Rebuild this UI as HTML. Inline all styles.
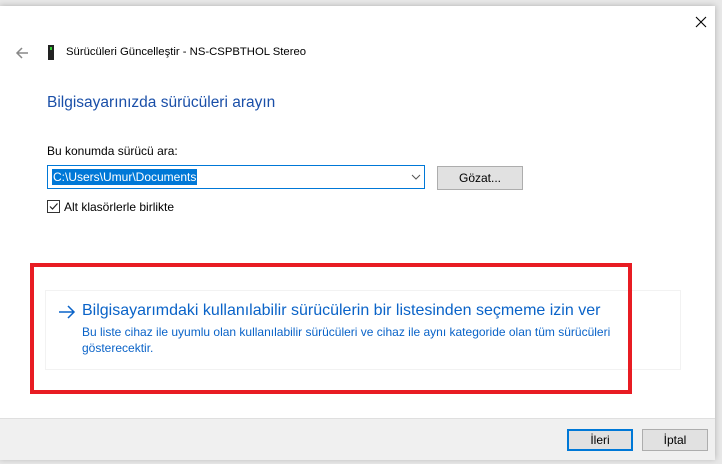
<!DOCTYPE html>
<html><head><meta charset="utf-8"><style>
body{margin:0;width:722px;height:464px;background:#e8e8e8;position:relative;overflow:hidden;font-family:"Segoe UI","Liberation Sans",sans-serif;font-size:12px;color:#000}
.win{position:absolute;left:0;top:6px;width:715px;height:453px;background:#fff;box-shadow:0 0 6px rgba(0,0,0,.25)}
.a{position:absolute;white-space:nowrap}
</style></head><body>
<div class="win">
<svg class="a" style="left:695px;top:10px" width="12" height="12"><path d="M1 1L11 11M11 1L1 11" stroke="#000" stroke-width="1.1"/></svg>
<svg class="a" style="left:15px;top:41px" width="14" height="12"><path d="M13 6H2M7 1L2 6L7 11" stroke="#888" stroke-width="1.5" fill="none"/></svg>
<div class="a" style="left:48px;top:39px;width:6px;height:15px;background:#222"></div>
<div class="a" style="left:50px;top:41px;width:2px;height:3px;background:#3c3"></div>
<div class="a" style="left:66px;top:40px;font-size:11.3px">Sürücüleri Güncelleştir - NS-CSPBTHOL Stereo</div>
<div class="a" style="left:47px;top:88px;font-size:15.5px;color:#1a4fa8">Bilgisayarınızda sürücüleri arayın</div>
<div class="a" style="left:47px;top:138px">Bu konumda sürücü ara:</div>
<div class="a" style="left:47px;top:159px;width:376px;height:22px;border:1px solid #0078d7"></div>
<div class="a" style="left:52px;top:163px;background:#0078d7;color:#fff;padding:0 1px;line-height:16px">C:\Users\Umur\Documents</div>
<svg class="a" style="left:411px;top:168px" width="10" height="6"><path d="M1 1L5 5L9 1" stroke="#555" fill="none"/></svg>
<div class="a" style="left:437px;top:160px;width:84px;height:22px;background:#e1e1e1;border:1px solid #adadad;text-align:center;line-height:22px">Gözat...</div>
<div class="a" style="left:47px;top:194px;width:11px;height:11px;border:1px solid #333"></div>
<svg class="a" style="left:48px;top:195px" width="11" height="11"><path d="M2 5.5L4.5 8L9.5 2.5" stroke="#222" stroke-width="1.2" fill="none"/></svg>
<div class="a" style="left:64px;top:194px">Alt klasörlerle birlikte</div>
<div class="a" style="left:45px;top:284px;width:634px;height:78px;border:1px solid #f2f2f2"></div>
<div class="a" style="left:30px;top:257px;width:594px;height:123px;border:4px solid #e81c23"></div>
<svg class="a" style="left:58px;top:299px" width="18" height="14"><path d="M1 7H16M10 1L16 7L10 13" stroke="#0a63c8" stroke-width="1.5" fill="none"/></svg>
<div class="a" style="left:82px;top:296px;font-size:16px;color:#0a63c8">Bilgisayarımdaki kullanılabilir sürücülerin bir listesinden seçmeme izin ver</div>
<div class="a" style="left:82px;top:318px;color:#0a63c8;font-size:12px;line-height:16px">Bu liste cihaz ile uyumlu olan kullanılabilir sürücüleri ve cihaz ile aynı kategoride olan tüm sürücüleri<br>gösterecektir.</div>
<div class="a" style="left:0;top:412px;width:715px;height:41px;background:#f0f0f0;border-top:1px solid #dfdfdf"></div>
<div class="a" style="left:567px;top:423px;width:62px;height:18px;background:#e1e1e1;border:2px solid #0078d7;text-align:center;line-height:18px">İleri</div>
<div class="a" style="left:642px;top:423px;width:64px;height:20px;background:#e1e1e1;border:1px solid #adadad;text-align:center;line-height:20px">İptal</div>
</div>
</body></html>
